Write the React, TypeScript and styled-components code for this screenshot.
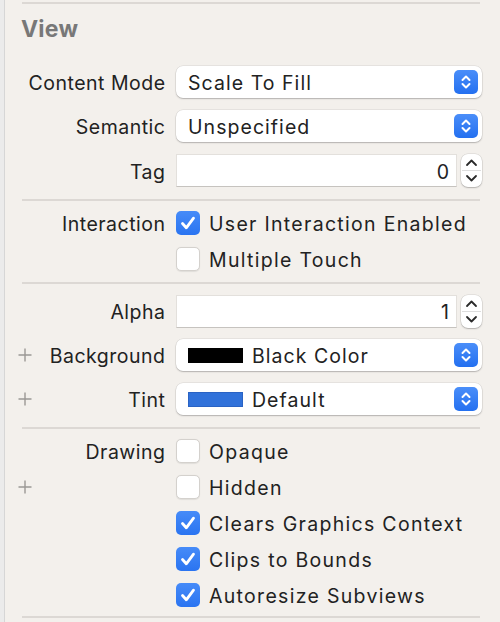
import React from "react";
import styled, { createGlobalStyle } from "styled-components";

const Global = createGlobalStyle`
  html, body { margin: 0; padding: 0; }
  body {
    background: #f3f0ec;
    font-family: Inter, "Noto Sans", "Liberation Sans", sans-serif;
    color: #222222;
    -webkit-font-smoothing: antialiased;
  }
`;

const Panel = styled.div`
  width: 500px;
  height: 622px;
  box-sizing: border-box;
  border-left: 4px solid #ebebeb;
  box-shadow: inset 1px 0 0 #d6d6d6;
  padding: 2px 18px 0 0;
  display: flex;
  flex-direction: column;
  overflow: hidden;
`;

const Separator = styled.div`
  height: 2px;
  background: #dcd8d4;
  margin: 0 2px 0 18px;
  flex: none;
`;

const Header = styled.div`
  font-size: 23px;
  line-height: 28px;
  font-weight: 700;
  letter-spacing: 0.2px;
  color: #787878;
  padding-left: 17px;
  margin-bottom: 11px;
`;

const Section = styled.div<{ $top: number; $bottom: number }>`
  display: flex;
  flex-direction: column;
  gap: 12px;
  padding-top: ${(p) => p.$top}px;
  padding-bottom: ${(p) => p.$bottom}px;
`;

const Row = styled.div<{ $h: number }>`
  display: grid;
  grid-template-columns: 172px 1fr;
  grid-template-rows: 100%;
  align-items: center;
  height: ${(p) => p.$h}px;
`;

const Plus = styled.div`
  grid-area: 1 / 1;
  justify-self: start;
  margin-left: 14px;
  display: flex;
  align-items: center;
`;

const Label = styled.div`
  grid-area: 1 / 1;
  justify-self: end;
  font-size: 19.5px;
  line-height: 24px;
  padding-top: 2px;
  letter-spacing: 0.5px;
  margin-right: 10.5px;
  white-space: nowrap;
  color: #222222;
`;

const Control = styled.div`
  grid-area: 1 / 2;
  min-width: 0;
`;

const Popup = styled.div`
  height: 32px;
  background: #ffffff;
  border-radius: 7px;
  box-shadow: 0 0 0 0.5px rgba(0, 0, 0, 0.1), 0 1px 1.5px rgba(0, 0, 0, 0.22);
  display: flex;
  align-items: center;
  padding: 0 4px 0 12px;
  gap: 9px;
  box-sizing: border-box;
`;

const Value = styled.span`
  flex: 1;
  font-size: 19.5px;
  line-height: 24px;
  padding-top: 2px;
  letter-spacing: 1.05px;
  white-space: nowrap;
  color: #222222;
`;

const Swatch = styled.span<{ $color: string; $edge: string }>`
  width: 55px;
  height: 15px;
  box-sizing: border-box;
  background: ${(p) => p.$color};
  border: 1px solid ${(p) => p.$edge};
  flex: none;
`;

const BlueButton = styled.span`
  width: 24px;
  height: 24px;
  border-radius: 5px;
  background: linear-gradient(#4a8ef9, #2470f0);
  display: flex;
  align-items: center;
  justify-content: center;
  flex: none;
`;

const FieldWrap = styled.div`
  display: flex;
  align-items: center;
  gap: 4px;
`;

const Field = styled.div`
  flex: 1;
  height: 33px;
  box-sizing: border-box;
  background: #ffffff;
  border: 1px solid #e3e0dc;
  border-bottom-color: #c6c3bf;
  display: flex;
  align-items: center;
  justify-content: flex-end;
  padding: 2px 7px 0 0;
  font-size: 19.5px;
  color: #222222;
`;

const Stepper = styled.div`
  width: 21px;
  height: 33px;
  border-radius: 7px;
  background: #ffffff;
  box-shadow: 0 0 0 0.5px rgba(0, 0, 0, 0.12), 0 1px 1.5px rgba(0, 0, 0, 0.22);
  flex: none;
  display: flex;
`;

const CheckRow = styled.label`
  display: flex;
  align-items: center;
  gap: 9px;
  font-size: 19.5px;
  letter-spacing: 1.3px;
  white-space: nowrap;
  color: #222222;
`;

const CheckText = styled.span`
  line-height: 24px;
  padding-top: 2px;
`;

const Box = styled.span<{ $on: boolean }>`
  width: 24px;
  height: 24px;
  box-sizing: border-box;
  border-radius: 5px;
  flex: none;
  display: flex;
  align-items: center;
  justify-content: center;
  background: ${(p) => (p.$on ? "linear-gradient(#468bf8, #2a74f1)" : "#ffffff")};
  border: ${(p) => (p.$on ? "none" : "1px solid #d4d1cd")};
  box-shadow: ${(p) => (p.$on ? "none" : "0 0.5px 1px rgba(0,0,0,0.08)")};
`;

const PlusIcon = () => (
  <svg width="14" height="14" viewBox="0 0 14 14">
    <path d="M7 0.5V13.5M0.5 7H13.5" stroke="#9b9895" strokeWidth="1.4" />
  </svg>
);

const UpDownWhite = () => (
  <svg width="24" height="24" viewBox="0 0 24 24">
    <path
      d="M8.5 10L12 6.5L15.5 10M8.5 14L12 17.5L15.5 14"
      fill="none"
      stroke="#ffffff"
      strokeWidth="2"
      strokeLinecap="round"
      strokeLinejoin="round"
    />
  </svg>
);

const StepperIcon = () => (
  <svg width="21" height="33" viewBox="0 0 21 33">
    <path d="M1 16.5H20" stroke="#dddddd" strokeWidth="1" />
    <path
      d="M6 11L10.5 6.5L15 11M6 22L10.5 26.5L15 22"
      fill="none"
      stroke="#2a2a2a"
      strokeWidth="1.8"
      strokeLinecap="round"
      strokeLinejoin="round"
    />
  </svg>
);

const Check = () => (
  <svg width="24" height="24" viewBox="0 0 24 24">
    <path
      d="M6.5 12.5L10.3 16.8L17.5 7.2"
      fill="none"
      stroke="#ffffff"
      strokeWidth="2.8"
      strokeLinecap="round"
      strokeLinejoin="round"
    />
  </svg>
);

type PopupProps = { value: string; swatch?: [string, string] };
const PopupButton = ({ value, swatch }: PopupProps) => (
  <Popup>
    {swatch && <Swatch $color={swatch[0]} $edge={swatch[1]} />}
    <Value>{value}</Value>
    <BlueButton>
      <UpDownWhite />
    </BlueButton>
  </Popup>
);

const NumberField = ({ value }: { value: string }) => (
  <FieldWrap>
    <Field>{value}</Field>
    <Stepper>
      <StepperIcon />
    </Stepper>
  </FieldWrap>
);

const Checkbox = ({ on, text }: { on: boolean; text: string }) => (
  <CheckRow>
    <Box $on={on}>{on && <Check />}</Box>
    <CheckText>{text}</CheckText>
  </CheckRow>
);

type RowProps = { h: number; label?: string; plus?: boolean; children: React.ReactNode };
const PropRow = ({ h, label, plus, children }: RowProps) => (
  <Row $h={h}>
    {plus && (
      <Plus>
        <PlusIcon />
      </Plus>
    )}
    {label && <Label>{label}</Label>}
    <Control>{children}</Control>
  </Row>
);

export default function App() {
  return (
    <>
      <Global />
      <Panel>
        <Separator />
        <Section $top={11} $bottom={12}>
          <Header>View</Header>
          <PropRow h={32} label="Content Mode">
            <PopupButton value="Scale To Fill" />
          </PropRow>
          <PropRow h={32} label="Semantic">
            <PopupButton value="Unspecified" />
          </PropRow>
          <PropRow h={33} label="Tag">
            <NumberField value="0" />
          </PropRow>
        </Section>
        <Separator />
        <Section $top={10} $bottom={11}>
          <PropRow h={24} label="Interaction">
            <Checkbox on text="User Interaction Enabled" />
          </PropRow>
          <PropRow h={24}>
            <Checkbox on={false} text="Multiple Touch" />
          </PropRow>
        </Section>
        <Separator />
        <Section $top={11} $bottom={12}>
          <PropRow h={32} label="Alpha">
            <NumberField value="1" />
          </PropRow>
          <PropRow h={32} label="Background" plus>
            <PopupButton value="Black Color" swatch={["#000000", "#000000"]} />
          </PropRow>
          <PropRow h={32} label="Tint" plus>
            <PopupButton value="Default" swatch={["#3172da", "#2a63c4"]} />
          </PropRow>
        </Section>
        <Separator />
        <Section $top={10} $bottom={9}>
          <PropRow h={24} label="Drawing">
            <Checkbox on={false} text="Opaque" />
          </PropRow>
          <PropRow h={24} plus>
            <Checkbox on={false} text="Hidden" />
          </PropRow>
          <PropRow h={24}>
            <Checkbox on text="Clears Graphics Context" />
          </PropRow>
          <PropRow h={24}>
            <Checkbox on text="Clips to Bounds" />
          </PropRow>
          <PropRow h={24}>
            <Checkbox on text="Autoresize Subviews" />
          </PropRow>
        </Section>
        <Separator />
      </Panel>
    </>
  );
}
